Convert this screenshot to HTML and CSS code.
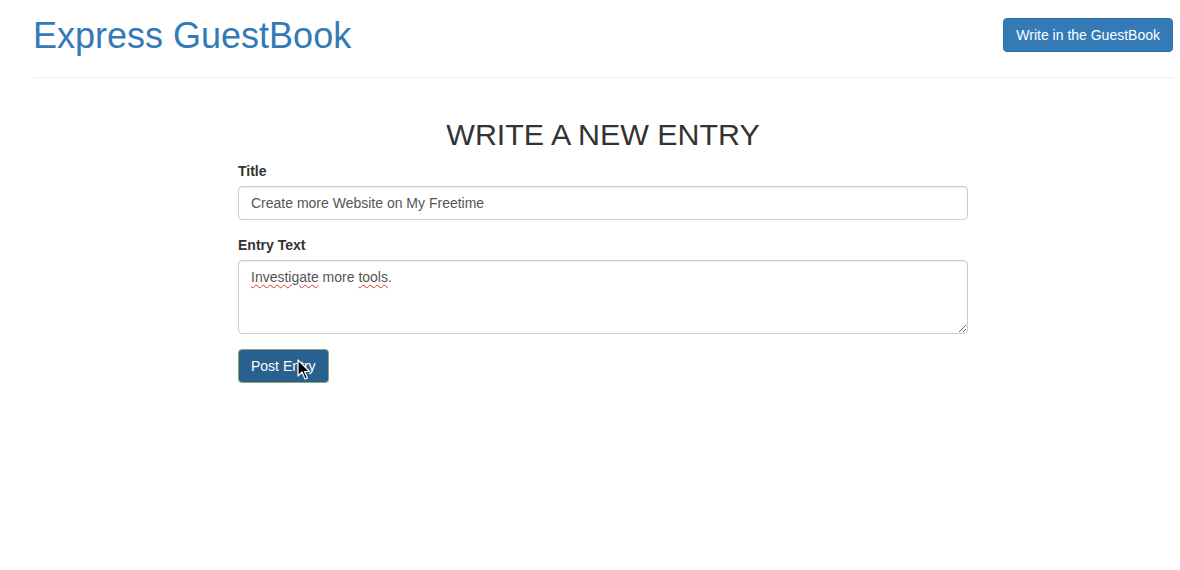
FILE: index.html
```html
<!DOCTYPE html>
<html lang="en">
<head>
<meta charset="utf-8">
<title>Express GuestBook</title>
<link rel="stylesheet" href="styles.css">
</head>
<body>
<div class="container">
  <header class="page-header">
    <h1 class="brand">Express GuestBook</h1>
    <a class="btn btn-primary" href="#">Write in the GuestBook</a>
  </header>
  <main class="form-wrap">
    <h2 class="form-title">WRITE A NEW ENTRY</h2>
    <form class="entry-form">
      <div class="form-group">
        <label class="label">Title</label>
        <div class="form-control input">Create more Website on My Freetime</div>
      </div>
      <div class="form-group">
        <label class="label">Entry Text</label>
        <div class="form-control textarea"><span class="spell">Investigate</span> more <span class="spell">tools</span>.</div>
      </div>
      <div class="submit-row">
        <button type="button" class="btn btn-post">Post Entry</button>
        <svg class="cursor" width="14" height="22" viewBox="0 0 14 22" aria-hidden="true">
          <path d="M1 1 L1 17 L5 13 L8 20 L10.5 19 L7.5 12.5 L12.5 12.5 Z" fill="#000" stroke="#fff" stroke-width="1.2" stroke-linejoin="round"/>
        </svg>
      </div>
    </form>
  </main>
</div>
</body>
</html>
```

FILE: styles.css
```css
* { box-sizing: border-box; }

html, body {
  margin: 0;
  padding: 0;
  background: #fff;
}

body {
  font-family: "Liberation Sans", Arial, Helvetica, sans-serif;
  font-size: 14px;
  line-height: 20px;
  color: #333;
}

.container {
  width: 1140px;
  margin-left: 33px;
}

.page-header {
  display: flex;
  justify-content: space-between;
  align-items: flex-start;
  padding-top: 16px;
  padding-bottom: 21px;
  border-bottom: 1px solid #eee;
}

.brand {
  margin: 0;
  font-size: 36px;
  line-height: 40px;
  font-weight: 400;
  color: #337ab7;
}

.btn {
  display: inline-block;
  padding: 6px 12px;
  font-family: inherit;
  font-size: 14px;
  line-height: 20px;
  border: 1px solid transparent;
  border-radius: 4px;
  text-decoration: none;
  cursor: pointer;
}

.btn-primary {
  margin-top: 2px;
  color: #fff;
  background: #337ab7;
  border-color: #2e6da4;
}

.form-wrap {
  width: 730px;
  margin: 0 auto;
  padding-top: 40px;
}

.form-title {
  margin: 0 0 10px;
  font-size: 30.4px;
  line-height: 33px;
  font-weight: 400;
  text-align: center;
  color: #333;
}

.form-group {
  margin-bottom: 15px;
}

.label {
  display: block;
  margin-bottom: 5px;
  font-weight: 700;
}

.form-control {
  width: 100%;
  padding: 6px 12px;
  color: #555;
  background: #fff;
  border: 1px solid #ccc;
  border-radius: 4px;
  box-shadow: inset 0 1px 1px rgba(0, 0, 0, 0.075);
}

.input {
  height: 34px;
}

.textarea {
  height: 74px;
  overflow: auto;
  resize: vertical;
}

.spell {
  text-decoration: underline wavy #e0332f;
  text-decoration-thickness: 1px;
  text-underline-offset: 2px;
}

.submit-row {
  position: relative;
  height: 34px;
}

.btn-post {
  color: #fff;
  background: #286090;
  border-color: #8ea274;
}

.cursor {
  position: absolute;
  left: 59px;
  top: 10px;
}
```
